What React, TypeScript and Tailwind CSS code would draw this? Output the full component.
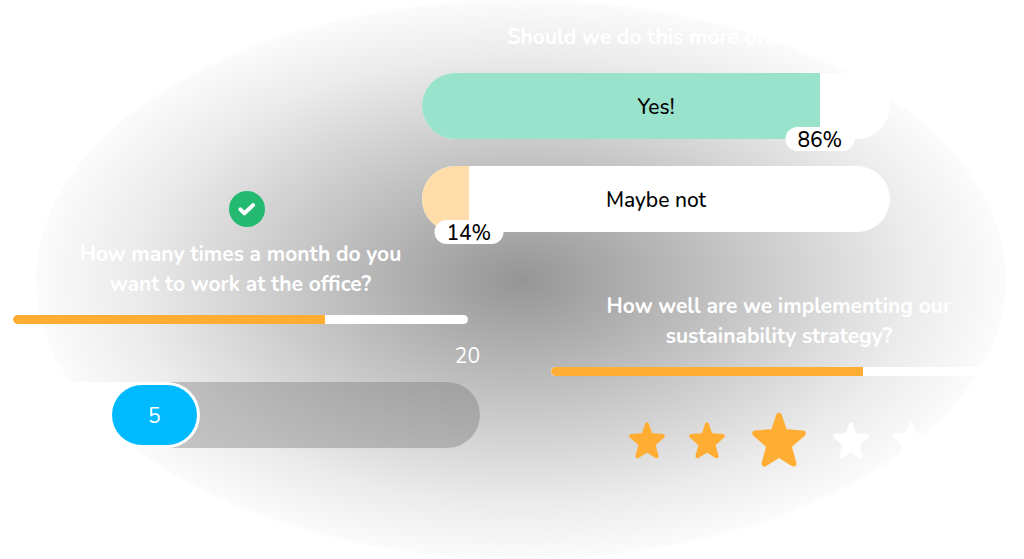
import { useState } from "react";
import clsx from "clsx";

const pollOptions = [
  { label: "Yes!", share: "86%", fill: "bg-[#99e2cb] w-[85%]", badge: "left-[85%]" },
  { label: "Maybe not", share: "14%", fill: "bg-[#ffddab] w-[10%]", badge: "left-[10%]" },
];

function Backdrop() {
  return (
    <div className="absolute inset-y-0 left-[3.5%] right-[1.8%] rounded-[50%] bg-[radial-gradient(closest-side,#959595,#cbcbcb_50%,#ebebeb_80%,#fbfbfb)]" />
  );
}

function ProgressBar() {
  return (
    <div className="h-[9px] w-full overflow-hidden rounded-full bg-white">
      <div className="h-full w-[68.5%] rounded-l-full bg-[#ffad33]" />
    </div>
  );
}

function Poll() {
  return (
    <section className="w-[80%]">
      <h2 className="text-center text-[21px] leading-[30px] font-bold whitespace-nowrap text-white">
        Should we do this more often?
      </h2>
      <div className="mt-[21px] flex flex-col gap-[27px]">
        {pollOptions.map((option) => (
          <button key={option.label} type="button" className="relative h-[66px] w-full text-[21px] font-medium text-black">
            <span className="flex h-full overflow-hidden rounded-full bg-white">
              <span className={clsx("h-full", option.fill)} />
            </span>
            <span className="absolute inset-0 flex items-center justify-center pt-1">{option.label}</span>
            {/* Share badge, centred on the end of the fill */}
            <span
              className={clsx(
                "absolute top-[54px] flex h-6 w-[69px] -translate-x-1/2 items-center justify-center rounded-full bg-white pt-1",
                option.badge
              )}
            >
              {option.share}
            </span>
          </button>
        ))}
      </div>
    </section>
  );
}

function OfficeDays() {
  const [days, setDays] = useState(5);

  return (
    <section className="flex flex-col">
      <svg viewBox="0 0 36 36" className="size-9 self-center" aria-hidden="true">
        <circle cx="18" cy="18" r="18" fill="#23ba70" />
        <path
          d="M11.4 18.3l4 4 8.7-8.2"
          fill="none"
          stroke="white"
          strokeWidth="4"
          strokeLinecap="round"
          strokeLinejoin="round"
        />
      </svg>
      <div className="mt-3 mr-3">
        <h2 className="text-center text-[21px] leading-[30px] font-bold text-white">
          <label htmlFor="days">
            How many times a month do you
            <br />
            want to work at the office?
          </label>
        </h2>
        <div className="mt-4">
          <ProgressBar />
        </div>
      </div>
      <p className="mt-[17px] text-right text-[21px] leading-[30px] text-white">20</p>
      <div className="relative mt-[11px] flex h-[66px]">
        <div className="z-10 flex w-[40%] justify-end rounded-full bg-white p-[3px]">
          <div className="flex w-[85px] items-center justify-center rounded-full bg-[#00baff] pt-1 text-[21px] text-white">
            {days}
          </div>
        </div>
        {/* Rest of the track, tucked under the rounded end of the fill */}
        <div className="-ml-9 flex-1 rounded-r-full bg-[#6e6e6e]/37" />
        <input
          id="days"
          type="range"
          min={0}
          max={20}
          value={days}
          onChange={(e) => setDays(Number(e.target.value))}
          className="absolute inset-0 z-20 size-full cursor-pointer opacity-0"
        />
      </div>
    </section>
  );
}

function StarRating() {
  const [rating, setRating] = useState(3);

  return (
    <section className="ml-auto w-[78%]">
      <h2 className="text-center text-[21px] leading-[30px] font-bold text-white">
        How well are we implementing our
        <br />
        sustainability strategy?
      </h2>
      <div className="mt-4">
        <ProgressBar />
      </div>
      <div className="mt-9 flex items-center justify-center gap-6">
        {[1, 2, 3, 4, 5].map((value) => (
          <label key={value} className="relative cursor-pointer">
            <input
              type="radio"
              name="rating"
              aria-label={`${value} stars`}
              checked={rating === value}
              onChange={() => setRating(value)}
              className="sr-only"
            />
            <svg
              viewBox="0 0 36 37"
              className={clsx(
                value === rating ? "mx-[3px] h-14 w-[54px]" : "h-[37px] w-9",
                value <= rating ? "text-[#ffad33]" : "text-white"
              )}
              aria-hidden="true"
            >
              <path
                d="M18 2.4L21.6 13.1L33.8 14.1L24.4 22.4L27.6 34.2L18 28.2L8.4 34.2L11.6 22.4L2.2 14.1L14.4 13.1Z"
                fill="currentColor"
                stroke="currentColor"
                strokeWidth="4"
                strokeLinejoin="round"
              />
            </svg>
          </label>
        ))}
      </div>
    </section>
  );
}

export default function App() {
  return (
    <main className="relative min-h-screen overflow-hidden bg-white font-['Nunito','Noto_Sans',sans-serif]">
      <Backdrop />
      {/* The two columns share the narrow middle track */}
      <div className="relative grid grid-cols-[409fr_58fr_527fr] pr-[17px] pl-[13px]">
        <div className="col-span-2 col-start-1 row-start-1 pt-[191px]">
          <OfficeDays />
        </div>
        <div className="pointer-events-none col-span-2 col-start-2 row-start-1 flex flex-col gap-[59px] pt-[22px] *:pointer-events-auto">
          <Poll />
          <StarRating />
        </div>
      </div>
    </main>
  );
}
